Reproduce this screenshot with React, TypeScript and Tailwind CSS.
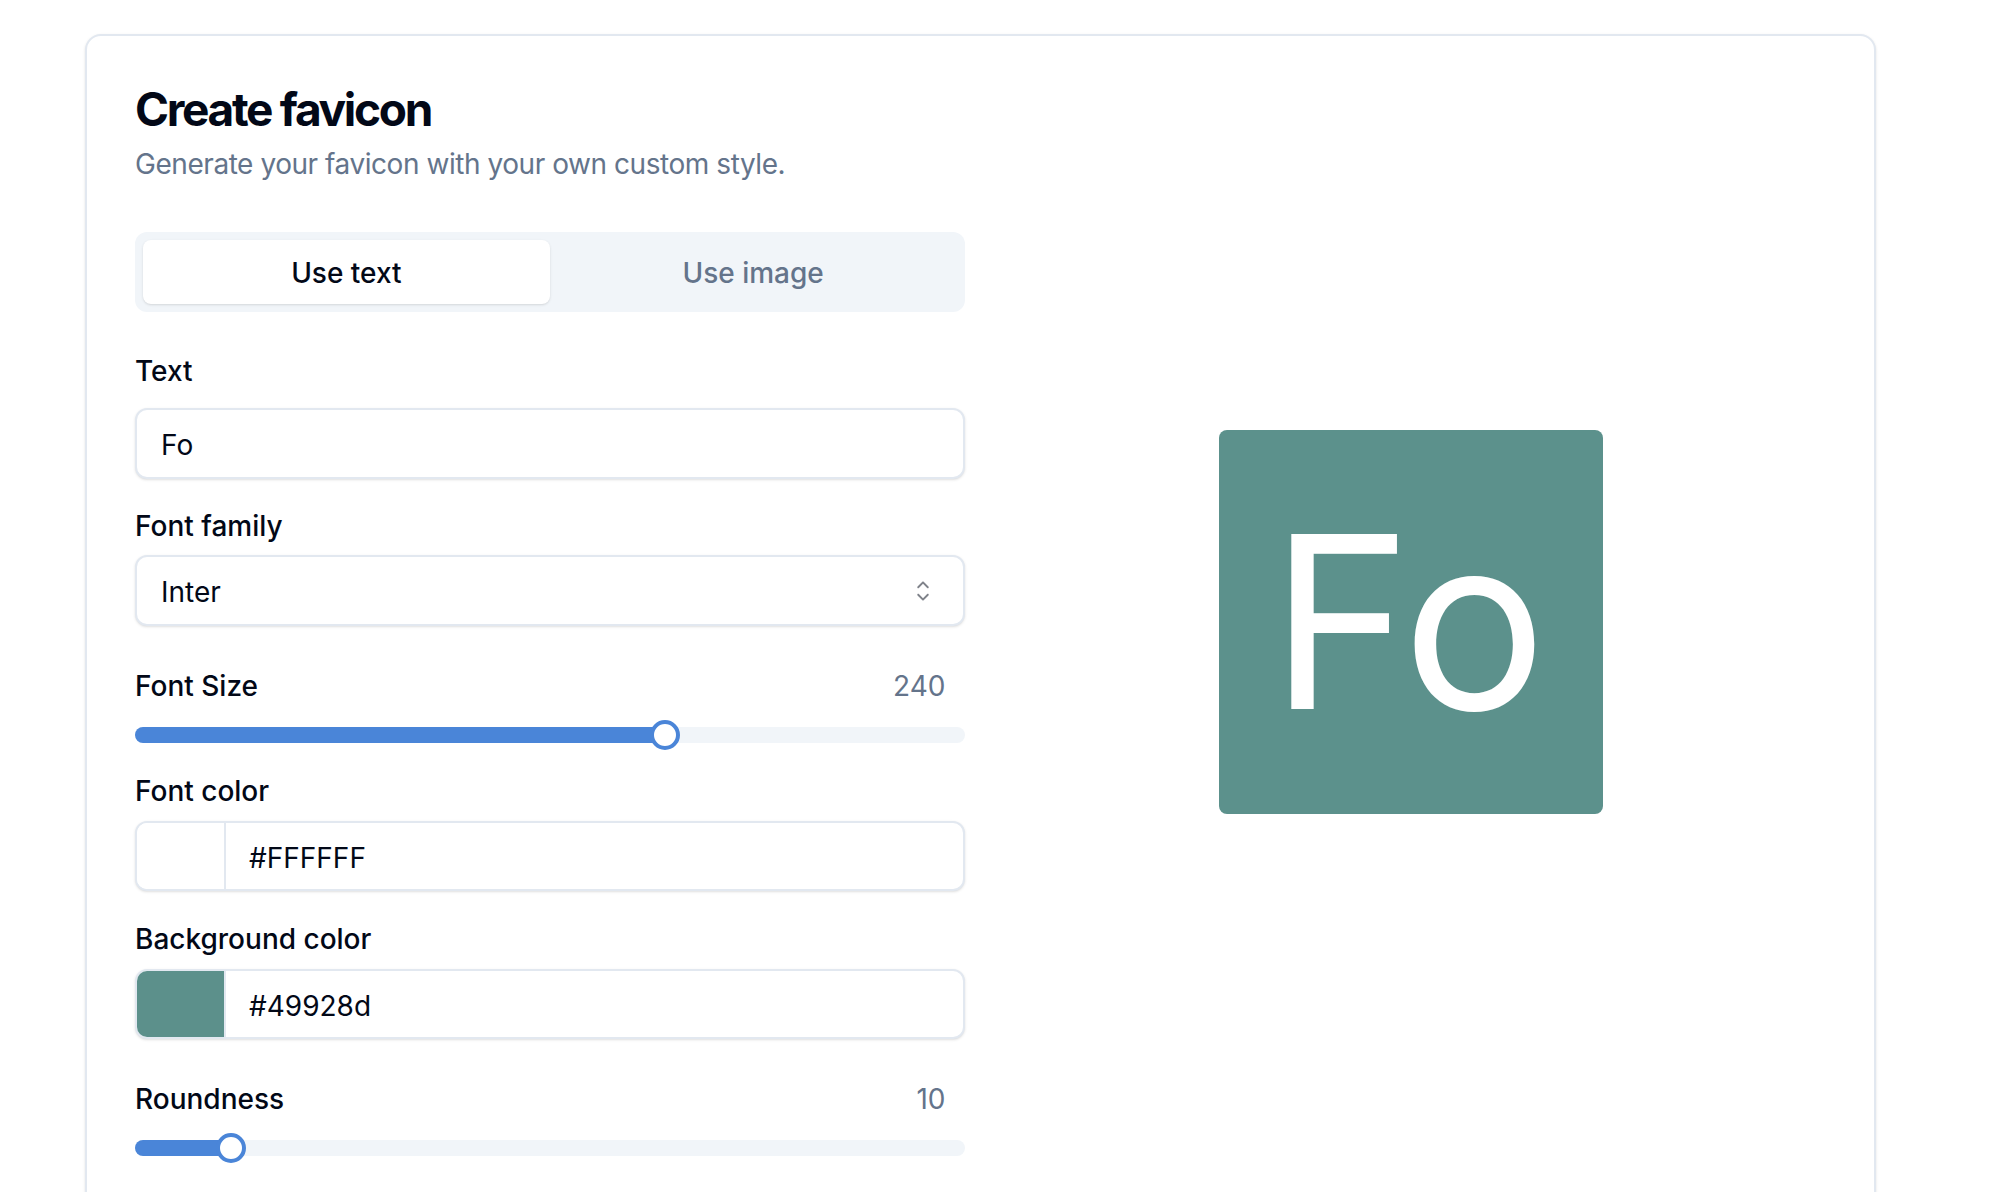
import { RxCaretSort } from "react-icons/rx";

function FieldLabel({ children, className = "" }: { children: React.ReactNode; className?: string }) {
    return (
        <label className={`block pt-[3px] text-[28px] font-medium leading-[28px] text-[#020817] ${className}`}>
            {children}
        </label>
    );
}

function SliderRow({ label, value, fillClass, thumbClass }: { label: string; value: string; fillClass: string; thumbClass: string }) {
    return (
        <>
            <div className="mt-[43px] flex items-center justify-between">
                <FieldLabel>{label}</FieldLabel>
                <span className="pr-[19px] pt-[3px] text-[28px] leading-[28px] text-[#64748b]">{value}</span>
            </div>
            <div className="relative mt-[20px] flex h-[30px] items-center">
                <div className="h-[16px] w-full overflow-hidden rounded-full bg-[#f1f5f9]">
                    <div className={`h-full bg-[#4a85d8] ${fillClass}`} />
                </div>
                <div className={`absolute top-0 h-[30px] w-[30px] rounded-full border-[4px] border-[#4a85d8] bg-white ${thumbClass}`} />
            </div>
        </>
    );
}

function ColorField({ swatchClass, value }: { swatchClass: string; value: string }) {
    return (
        <div className="mt-[16px] flex h-[70px] overflow-hidden rounded-[12px] border-2 border-[#e2e8f0] bg-white shadow-sm">
            <div className={`w-[87px] ${swatchClass}`} />
            <div className="flex flex-1 items-center border-l-2 border-[#e2e8f0] px-[23px] pt-[3px] text-[28px] text-[#020817]">
                {value}
            </div>
        </div>
    );
}

export default function App() {
    return (
        <div className="min-h-screen bg-white pl-[85px] pt-[34px] font-['Inter',sans-serif]">
            <div className="w-[1791px] rounded-[16px] border-2 border-[#e2e8f0] bg-white shadow-sm">
                <div className="flex flex-col gap-[12px] p-[48px]">
                    <h1 className="pt-[2px] text-[46px] font-bold leading-[46px] tracking-[-0.05em] text-[#020817]">Create favicon</h1>
                    <p className="pt-[1px] text-[28px] leading-[39px] tracking-[-0.016em] text-[#64748b]">Generate your favicon with your own custom style.</p>
                </div>

                <div className="grid grid-cols-2 gap-[32px] px-[48px] pb-[96px]">
                    {/* form */}
                    <div className="flex flex-col">
                        <div className="flex h-[80px] rounded-[12px] bg-[#f1f5f9] p-[8px]">
                            <button className="flex-1 rounded-[8px] bg-white pt-[2px] text-[28px] font-medium text-[#020817] shadow-sm">
                                Use text
                            </button>
                            <button className="flex-1 rounded-[8px] pt-[2px] text-[28px] font-medium text-[#64748b]">
                                Use image
                            </button>
                        </div>

                        <FieldLabel className="mt-[42px]">Text</FieldLabel>
                        <div className="mt-[23px] flex h-[71px] items-center rounded-[12px] border-2 border-[#e2e8f0] bg-white px-[24px] pt-[3px] text-[28px] text-[#020817] shadow-sm">
                            Fo
                        </div>

                        <FieldLabel className="mt-[30px]">Font family</FieldLabel>
                        <div className="mt-[15px] flex h-[71px] items-center justify-between rounded-[12px] border-2 border-[#e2e8f0] bg-white pl-[24px] pr-[24px] text-[28px] text-[#020817] shadow-sm">
                            <span className="pt-[3px]">Inter</span>
                            <RxCaretSort size={32} className="text-[#020817] opacity-50" />
                        </div>

                        <SliderRow label="Font Size" value="240" fillClass="w-[530px]" thumbClass="left-[515px]" />

                        <FieldLabel className="mt-[24px]">Font color</FieldLabel>
                        <ColorField swatchClass="bg-white" value="#FFFFFF" />

                        <FieldLabel className="mt-[31px]">Background color</FieldLabel>
                        <ColorField swatchClass="bg-[#5c908b]" value="#49928d" />

                        <SliderRow label="Roundness" value="10" fillClass="w-[96px]" thumbClass="left-[81px]" />
                    </div>

                    {/* preview */}
                    <div className="flex items-start justify-center">
                        <div className="mt-[198px] flex h-[384px] w-[384px] items-center justify-center rounded-[8px] bg-[#5c918c]">
                            <span className="pr-[6px] text-[240px] font-normal leading-none text-white">Fo</span>
                        </div>
                    </div>
                </div>
            </div>
        </div>
    );
}
